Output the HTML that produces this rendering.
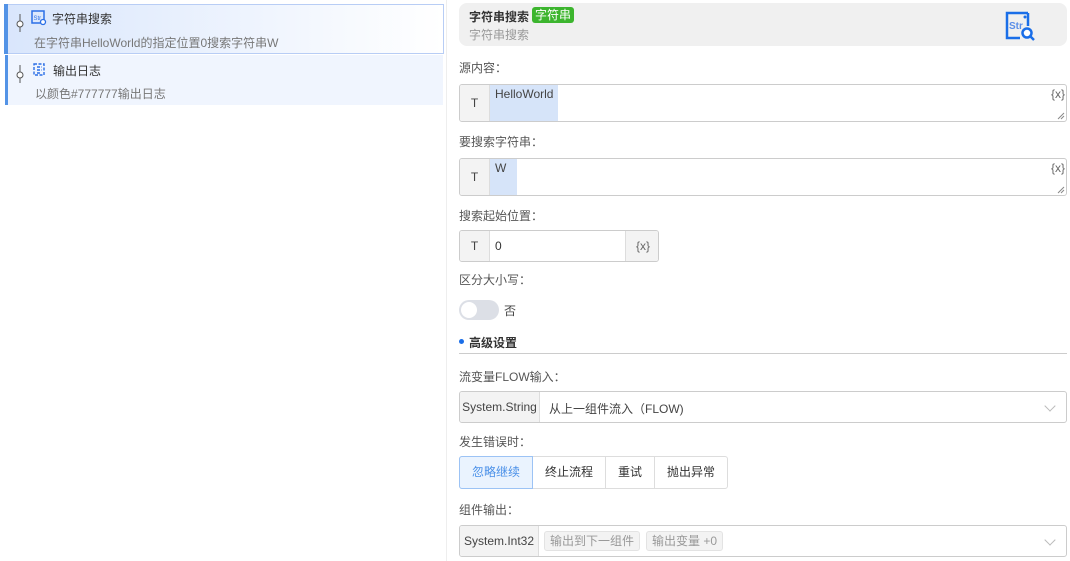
<!DOCTYPE html>
<html><head><meta charset="utf-8"><style>
*{box-sizing:border-box;margin:0;padding:0}
body{width:1070px;height:561px;overflow:hidden;background:#fff;font-family:"Liberation Sans","Noto Sans CJK SC",sans-serif;font-size:12px;color:#333;position:relative}
.a{position:absolute}
.lbl{position:absolute;left:459px;font-size:12px;color:#555}
.box{position:absolute;border:1px solid #ccc;border-radius:3px;background:#fff;overflow:hidden}
.pre{position:absolute;left:0;top:0;bottom:0;background:#f3f3f3;border-right:1px solid #ddd;display:flex;align-items:center;justify-content:center;color:#444}
.chev{position:absolute;right:12px;top:10px;width:8px;height:8px;border-right:1px solid #bbb;border-bottom:1px solid #bbb;transform:rotate(45deg)}
.tag{position:absolute;top:5px;height:20px;border:1px solid #e3e3e3;background:#f3f3f3;border-radius:3px;color:#999;line-height:18px;padding:0 5px}
.rs{position:absolute;right:1px;bottom:1px}
</style></head><body>
<div class="a" style="left:4px;top:4px;width:440px;height:50px;border:1px solid #b8cdf5;background:linear-gradient(90deg,#d9e6fc,#ffffff);"></div>
<div class="a" style="left:4px;top:4px;width:4px;height:50px;background:#5393e6"></div>
<div class="a" style="left:5px;top:55px;width:438px;height:50px;background:#f0f5fe"></div>
<div class="a" style="left:5px;top:55px;width:3px;height:50px;background:#5393e6"></div>
<svg class="a" style="left:15px;top:14px" width="10" height="18"><line x1="5" y1="0" x2="5" y2="18" stroke="#555"/><circle cx="5" cy="10" r="3" fill="#fff" stroke="#555"/></svg>
<svg class="a" style="left:15px;top:65px" width="10" height="18"><line x1="5" y1="0" x2="5" y2="18" stroke="#555"/><circle cx="5" cy="10" r="3" fill="#fff" stroke="#555"/></svg>
<svg class="a" style="left:31px;top:10px" width="16" height="16"><rect x="1" y="1" width="12" height="12" fill="none" stroke="#2b6fe6" stroke-width="1.5"/><text x="2.5" y="10" font-size="6" fill="#2b6fe6" font-family="Liberation Sans">Str</text><circle cx="12" cy="12" r="2.5" fill="#fff" stroke="#2b6fe6" stroke-width="1.3"/></svg>
<div class="a" style="left:52px;top:10px;font-size:12px;color:#333">字符串搜索</div>
<div class="a" style="left:34px;top:34px;color:#777">在字符串HelloWorld的指定位置0搜索字符串W</div>
<svg class="a" style="left:32px;top:62px" width="16" height="16"><path d="M2 2h10v11H2z M5 5h5 M5 8h5 M5 11h3" fill="none" stroke="#2b6fe6" stroke-width="1.4" stroke-dasharray="3 1.5"/></svg>
<div class="a" style="left:53px;top:62px;color:#333">输出日志</div>
<div class="a" style="left:35px;top:85px;color:#777">以颜色#777777输出日志</div>
<div class="a" style="left:446px;top:0;width:1px;height:561px;background:#eee"></div>
<div class="a" style="left:459px;top:3px;width:608px;height:43px;background:#f0f0f0;border-radius:8px"></div>
<div class="a" style="left:469px;top:8px;font-weight:bold;color:#333">字符串搜索</div>
<div class="a" style="left:532px;top:7px;height:16px;background:#3cb52e;color:#fff;border-radius:3px;padding:0 3px;line-height:16px">字符串</div>
<div class="a" style="left:469px;top:26px;color:#999">字符串搜索</div>
<svg class="a" style="left:1005px;top:11px" width="34" height="32"><path d="M23 2H2v25h13" fill="none" stroke="#1a6ee8" stroke-width="2.5"/><path d="M23 2v13" stroke="#1a6ee8" stroke-width="2.5"/><circle cx="20" cy="6" r="1.5" fill="#1a6ee8"/><text x="4" y="18" font-size="10" font-weight="bold" fill="#5a8ee8" font-family="Liberation Sans">Str</text><circle cx="22" cy="22" r="4.5" fill="#fff" stroke="#1a6ee8" stroke-width="2.5"/><line x1="25" y1="25" x2="29" y2="29" stroke="#1a6ee8" stroke-width="2.5"/></svg>
<div class="lbl" style="top:59px">源内容：</div>
<div class="box" style="left:459px;top:84px;width:608px;height:38px"><div class="pre" style="width:30px">T</div><div class="a" style="left:30px;top:0;width:68px;height:38px;background:#d6e4f9;padding:2px 5px;color:#444">HelloWorld</div><div class="a" style="right:1px;top:2px;color:#666">{x}</div><svg class="rs" width="8" height="8"><path d="M1 7L7 1M4 7L7 4" stroke="#888"/></svg></div>
<div class="lbl" style="top:133px">要搜索字符串：</div>
<div class="box" style="left:459px;top:158px;width:608px;height:38px"><div class="pre" style="width:30px">T</div><div class="a" style="left:30px;top:0;width:27px;height:38px;background:#d6e4f9;padding:2px 5px;color:#444">W</div><div class="a" style="right:1px;top:2px;color:#666">{x}</div><svg class="rs" width="8" height="8"><path d="M1 7L7 1M4 7L7 4" stroke="#888"/></svg></div>
<div class="lbl" style="top:207px">搜索起始位置：</div>
<div class="box" style="left:459px;top:230px;width:200px;height:32px"><div class="pre" style="width:30px">T</div><div class="a" style="left:35px;top:8px">0</div><div class="pre" style="left:165px;width:35px;border-right:0;border-left:1px solid #ddd;color:#666">{x}</div></div>
<div class="lbl" style="top:271px">区分大小写：</div>
<div class="a" style="left:459px;top:300px;width:40px;height:20px;border-radius:10px;background:#dcdfe6"></div>
<div class="a" style="left:461px;top:302px;width:16px;height:16px;border-radius:8px;background:#fff"></div>
<div class="a" style="left:504px;top:302px;color:#444">否</div>
<div class="a" style="left:459px;top:339px;width:5px;height:5px;border-radius:3px;background:#1a6ee8"></div>
<div class="a" style="left:469px;top:334px;font-weight:bold;color:#333">高级设置</div>
<div class="a" style="left:459px;top:353px;width:608px;height:1px;background:#ccc"></div>
<div class="lbl" style="top:368px">流变量FLOW输入：</div>
<div class="box" style="left:459px;top:391px;width:608px;height:32px"><div class="pre" style="width:80px">System.String</div><div class="a" style="left:89px;top:8px;color:#444">从上一组件流入（FLOW)</div><div class="chev"></div></div>
<div class="lbl" style="top:433px">发生错误时：</div>
<div class="box" style="left:459px;top:456px;width:269px;height:33px;border-color:#ddd"></div>
<div class="a" style="left:459px;top:456px;width:74px;height:33px;border:1px solid #9cc3f5;background:#eaf3fe;color:#4a90e8;border-radius:3px 0 0 3px;text-align:center;line-height:31px">忽略继续</div>
<div class="a" style="left:533px;top:456px;width:73px;height:33px;border-right:1px solid #ddd;text-align:center;line-height:33px">终止流程</div>
<div class="a" style="left:606px;top:456px;width:49px;height:33px;border-right:1px solid #ddd;text-align:center;line-height:33px">重试</div>
<div class="a" style="left:655px;top:456px;width:72px;height:33px;text-align:center;line-height:33px">抛出异常</div>
<div class="lbl" style="top:501px">组件输出：</div>
<div class="box" style="left:459px;top:525px;width:608px;height:32px"><div class="pre" style="width:79px">System.Int32</div><div class="tag" style="left:84px">输出到下一组件</div><div class="tag" style="left:186px">输出变量 +0</div><div class="chev"></div></div>
</body></html>
